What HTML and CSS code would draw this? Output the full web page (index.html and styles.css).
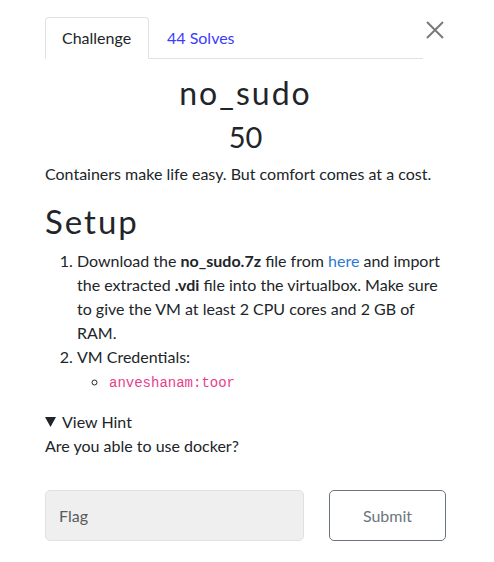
FILE: index.html
```html
<!DOCTYPE html>
<html>
<head>
<meta charset="utf-8">
<link rel="stylesheet" href="styles.css">
</head>
<body>
<div class="modal">
  <button class="close" aria-label="Close">
    <svg width="18" height="18" viewBox="0 0 18 18"><path d="M1 1 L17 17 M17 1 L1 17" stroke="#7a7a7a" stroke-width="2" fill="none"/></svg>
  </button>
  <nav class="tabs">
    <a class="tab active">Challenge</a>
    <a class="tab link">44 Solves</a>
  </nav>
  <h2 class="name">no_sudo</h2>
  <h3 class="value">50</h3>
  <p class="desc">Containers make life easy. But comfort comes at a cost.</p>
  <h1 class="setup">Setup</h1>
  <ol class="steps">
    <li>Download the <b>no_sudo.7z</b> file from <a class="here">here</a> and import the extracted <b>.vdi</b> file into the virtualbox. Make sure to give the VM at least 2 CPU cores and 2 GB of RAM.</li>
    <li>VM Credentials:
      <ul class="creds"><li><code>anveshanam:toor</code></li></ul>
    </li>
  </ol>
  <div class="hint">
    <div class="hint-title"><svg class="tri" width="11" height="10" viewBox="0 0 11 10"><path d="M0 0 H11 L5.5 10 Z" fill="#212529"/></svg>View Hint</div>
    <div class="hint-body">Are you able to use docker?</div>
  </div>
  <form class="submit-row">
    <input class="flag" type="text" placeholder="Flag">
    <button class="btn" type="button">Submit</button>
  </form>
</div>
</body>
</html>
```
FILE: styles.css
```css
* { box-sizing: border-box; }
body {
  margin: 0;
  background: #fff;
  font-family: Lato, "Open Sans", sans-serif;
  color: #212529;
  font-size: 16px;
  line-height: 24px;
}
.modal {
  position: relative;
  padding: 17px 48px 0 45px;
}
.close {
  position: absolute;
  top: 21px;
  left: 426px;
  border: 0;
  background: none;
  padding: 0;
  width: 18px;
  height: 18px;
}
.tabs {
  display: flex;
  width: 378px;
  border-bottom: 1px solid #dee2e6;
}
.tab {
  display: block;
  line-height: 24px;
  border: 1px solid transparent;
  border-top-left-radius: 4px;
  border-top-right-radius: 4px;
  margin-bottom: -1px;
  padding: 8px 16px 8px;
}
.tab.active {
  color: #212529;
  border-color: #dee2e6 #dee2e6 #fff;
  background: #fff;
  width: 104px;
}
.tab.link { color: #3b3bff; padding-left: 17px; }
.name {
  margin: 13px 0 0;
  text-align: center;
  font-weight: 400;
  font-size: 32px;
  line-height: 42px;
  letter-spacing: 2px;
}
.value {
  margin: 3px 0 0;
  text-align: center;
  font-weight: 400;
  font-size: 29px;
  line-height: 40px;
}
.desc { margin: 5px 0 0; }
.setup {
  margin: 11px 0 0;
  font-weight: 400;
  font-size: 33px;
  line-height: 48px;
  letter-spacing: 2px;
}
.steps { margin: 4px 0 0; padding-left: 32px; }
.here { color: #2a7bd1; }
.creds { list-style: circle; margin: 0; padding-left: 32px; }
code {
  font-family: "Liberation Mono", monospace;
  font-size: 14px;
  color: #e83e8c;
}
.hint { margin-top: 15px; }
.hint-title { display: flex; align-items: center; }
.tri { margin-right: 6px; flex: none; }
.submit-row {
  display: flex;
  justify-content: space-between;
  margin-top: 32px;
  width: 401px;
}
.flag {
  width: 259px;
  height: 51px;
  border: 1px solid #dfe1e4;
  border-radius: 5px;
  background: #efefef;
  padding: 0 13px;
  font-family: Lato, sans-serif;
  font-size: 16px;
  color: #555;
}
.flag::placeholder { color: #595b5e; }
.btn {
  width: 117px;
  height: 51px;
  border: 1px solid #6c757d;
  border-radius: 5px;
  background: #fff;
  color: #6c757d;
  font-family: Lato, sans-serif;
  font-size: 16px;
}
```
